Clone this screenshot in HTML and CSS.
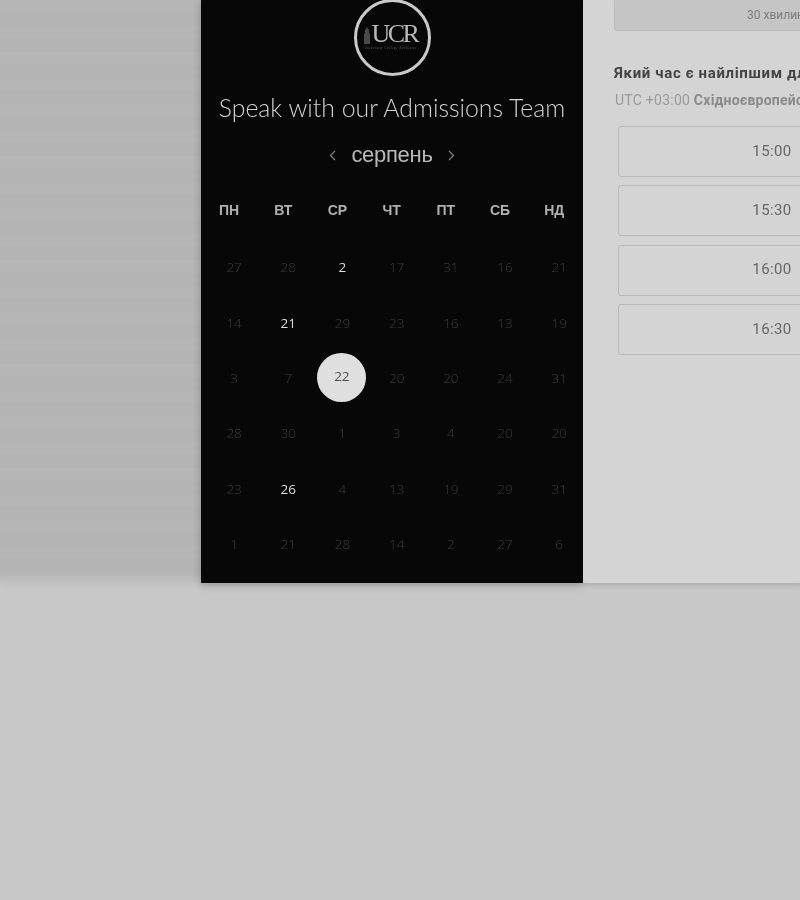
FILE: index.html
```html
<!DOCTYPE html>
<html lang="uk">
<head>
  <meta charset="UTF-8">
  <meta name="viewport" content="width=device-width, initial-scale=1.0">
  <title>Speak with our Admissions Team</title>
  <link rel="stylesheet" href="styles.css">
</head>
<body>
<div class="hero">
  <div class="calendar">
    <div class="logo">
      <svg class="logo-tower" width="8" height="17" viewBox="0 0 8 17"><path d="M1 17V7l1-1V3l2-3 2 3v3l1 1v10z" fill="#4a4a4a"/></svg>
      <span class="logo-name">UCR</span>
      <span class="logo-sub">University College Rochester</span>
    </div>
    <h1 class="title">Speak with our Admissions Team</h1>
    <div class="month">
      <svg width="7" height="11" viewBox="0 0 7 11"><path d="M6 1L1.5 5.5 6 10" fill="none" stroke="#7a7a7a" stroke-width="1.4"/></svg>
      <span class="month-name">серпень</span>
      <svg width="7" height="11" viewBox="0 0 7 11"><path d="M1 1l4.5 4.5L1 10" fill="none" stroke="#7a7a7a" stroke-width="1.4"/></svg>
    </div>
    <div class="weekdays">
      <span>ПН</span><span>ВТ</span><span>СР</span><span>ЧТ</span><span>ПТ</span><span>СБ</span><span>НД</span>
    </div>
    <div class="days">
      <span>27</span><span>28</span><span class="on">2</span><span>17</span><span>31</span><span>16</span><span>21</span>
      <span>14</span><span class="on">21</span><span>29</span><span>23</span><span>16</span><span>13</span><span>19</span>
      <span>3</span><span>7</span><span class="selected">22</span><span>20</span><span>20</span><span>24</span><span>31</span>
      <span>28</span><span>30</span><span>1</span><span>3</span><span>4</span><span>20</span><span>20</span>
      <span>23</span><span class="on">26</span><span>4</span><span>13</span><span>19</span><span>29</span><span>31</span>
      <span>1</span><span>21</span><span>28</span><span>14</span><span>2</span><span>27</span><span>6</span>
    </div>
  </div>
  <div class="times">
    <div class="duration">30 хвилин</div>
    <h2 class="question">Який час є найліпшим для вас?</h2>
    <p class="zone">UTC +03:00 <b>Східноєвропейський час</b></p>
    <div class="slots">
      <button class="slot">15:00</button>
      <button class="slot">15:30</button>
      <button class="slot">16:00</button>
      <button class="slot">16:30</button>
    </div>
  </div>
</div>
</body>
</html>
```

FILE: styles.css
```css
html, body {
  margin: 0;
  padding: 0;
  height: 100%;
  overflow: hidden;
  background: #c8c8c8;
}
.hero {
  display: flex;
  height: 583px;
  padding-left: 201px;
  box-sizing: border-box;
  background-color: #b5b5b5;
  background-image:
    linear-gradient(to bottom, rgba(200, 200, 200, 0) 574px, rgba(200, 200, 200, .6) 583px),
    repeating-linear-gradient(to bottom, #b6b6b6 0, #b6b6b6 13px, #b4b4b4 13px, #b4b4b4 26px);
  box-shadow: 0 3px 4px rgba(0, 0, 0, .04);
  filter: grayscale(1) blur(.4px);
}
.calendar {
  flex: none;
  width: 382px;
  height: 583px;
  overflow: hidden;
  background: #070707;
  box-shadow: 0 2px 8px rgba(0, 0, 0, .25);
}
.logo {
  position: relative;
  width: 71px;
  height: 71px;
  margin: -1px auto 0;
  border: 3px solid #c9c9c9;
  border-radius: 50%;
  color: #b9b9b9;
}
.logo-name {
  position: absolute;
  left: 15px;
  top: 22px;
  font: 26px/20px "Liberation Serif", serif;
  letter-spacing: -2.6px;
}
.logo-tower {
  position: absolute;
  left: 6px;
  top: 25px;
}
.logo-sub {
  position: absolute;
  left: 8px;
  top: 44px;
  font: 3px/4px "Liberation Serif", serif;
  letter-spacing: .6px;
  color: #6a6a6a;
  white-space: nowrap;
}
.title {
  margin: 14px 0 0;
  height: 36px;
  font: 300 24.8px/36px Lato, sans-serif;
  color: #d2d2d2;
  text-align: center;
  white-space: nowrap;
}
.month {
  display: flex;
  align-items: center;
  justify-content: center;
  gap: 15px;
  height: 30px;
  margin-top: 14px;
}
.month-name {
  font: 22px/30px "Liberation Sans", sans-serif;
  letter-spacing: -.3px;
  color: #b9b9b9;
}
.weekdays {
  display: grid;
  grid-template-columns: repeat(7, 54.2px);
  margin-top: 30px;
  padding-left: 1px;
  font: bold 14px/20px "Liberation Sans", sans-serif;
  color: #b0b0b0;
  text-align: center;
}
.days {
  display: grid;
  grid-template-columns: repeat(7, 54.2px);
  grid-auto-rows: 55.4px;
  margin-top: 19.6px;
  padding-left: 6px;
  font: 300 13.5px/20px "Open Sans", sans-serif;
  color: #3c3c3c;
}
.days span {
  display: flex;
  align-items: center;
  justify-content: center;
}
.days .on {
  color: #dedede;
  font-weight: 500;
}
.days .selected {
  box-sizing: border-box;
  width: 49px;
  height: 49px;
  margin: 3px 0 0 2px;
  padding-bottom: 3px;
  border-radius: 50%;
  background: #dfdfdf;
  color: #505050;
  font-weight: 400;
}
.times {
  flex: none;
  width: 400px;
  height: 583px;
  box-sizing: border-box;
  padding-left: 31px;
  background: #d4d4d4;
  box-shadow: 0 2px 4px rgba(0, 0, 0, .1);
  font-family: Roboto, sans-serif;
}
.duration {
  box-sizing: border-box;
  height: 32px;
  margin-top: -1px;
  width: 340px;
  padding: 8px 0 0 132px;
  border: 1px solid #bcbcbc;
  border-radius: 3px;
  background: #c5c5c5;
  font-size: 12px;
  line-height: 14px;
  color: #7d7d7d;
  white-space: nowrap;
}
.question {
  margin: 33px 0 0;
  font-size: 15px;
  line-height: 18px;
  font-weight: 700;
  letter-spacing: .65px;
  color: #444;
  white-space: nowrap;
}
.zone {
  margin: 9px 0 0 1px;
  font-size: 14px;
  line-height: 18px;
  letter-spacing: .25px;
  color: #999;
  white-space: nowrap;
}
.zone b {
  color: #8a8a8a;
}
.slots {
  display: flex;
  flex-direction: column;
  gap: 8.4px;
  margin: 17px 0 0 4px;
}
.slot {
  box-sizing: border-box;
  width: 308px;
  height: 51px;
  padding: 0 0 2px;
  border: 1px solid #b9b9b9;
  border-radius: 3px;
  background: transparent;
  font: 15px Roboto, sans-serif;
  letter-spacing: .4px;
  color: #666;
}
```
